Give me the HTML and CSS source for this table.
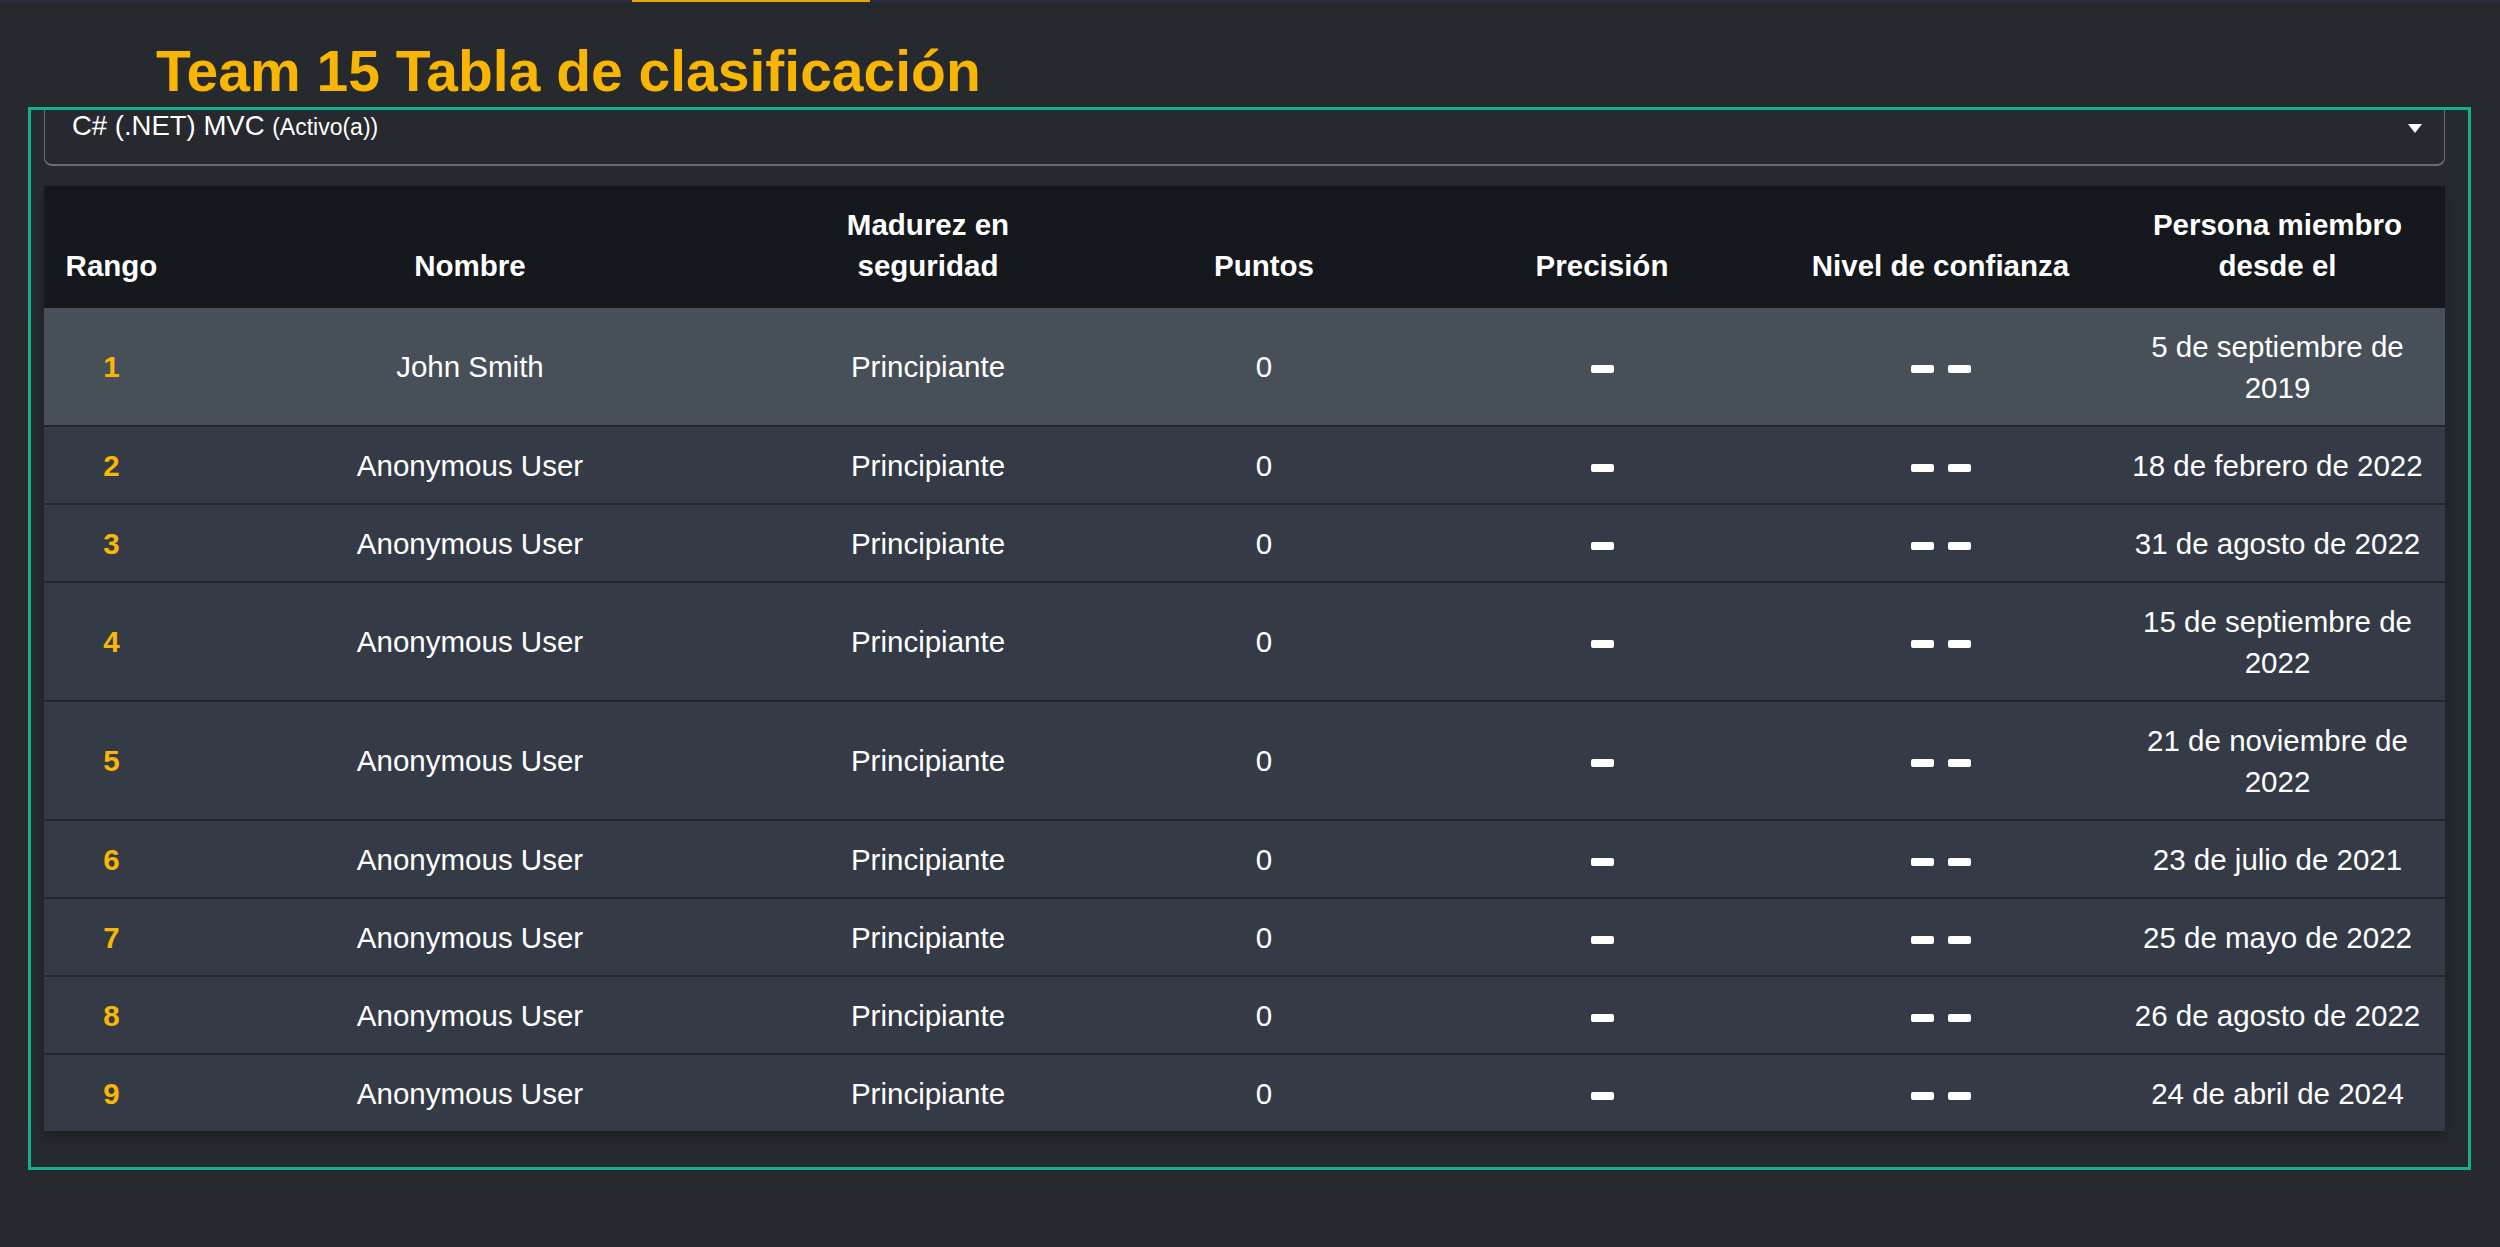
FILE: index.html
```html
<!DOCTYPE html>
<html lang="es">
<head>
<meta charset="utf-8">
<title>Team 15 Tabla de clasificación</title>
<link rel="stylesheet" href="styles.css">
</head>
<body>
<div class="topbar"><span class="topbar-accent"></span></div>
<h1 class="title">Team 15 Tabla de clasificación</h1>
<section class="board">
  <div class="select">
    <span class="select-text">C# (.NET) MVC <small>(Activo(a))</small></span>
    <span class="caret"></span>
  </div>
  <table class="ranking">
    <colgroup>
      <col class="c-rank"><col class="c-name"><col class="c-mat"><col class="c-pts"><col class="c-prec"><col class="c-conf"><col>
    </colgroup>
    <thead>
      <tr>
        <th>Rango</th><th>Nombre</th><th>Madurez en seguridad</th><th>Puntos</th><th>Precisión</th><th>Nivel de confianza</th><th>Persona miembro desde el</th>
      </tr>
    </thead>
    <tbody>
      <tr class="me"><td class="rank">1</td><td>John Smith</td><td>Principiante</td><td>0</td><td><span class="dash"></span></td><td><span class="dash"></span><span class="dash"></span></td><td>5 de septiembre de 2019</td></tr>
      <tr><td class="rank">2</td><td>Anonymous User</td><td>Principiante</td><td>0</td><td><span class="dash"></span></td><td><span class="dash"></span><span class="dash"></span></td><td>18 de febrero de 2022</td></tr>
      <tr><td class="rank">3</td><td>Anonymous User</td><td>Principiante</td><td>0</td><td><span class="dash"></span></td><td><span class="dash"></span><span class="dash"></span></td><td>31 de agosto de 2022</td></tr>
      <tr><td class="rank">4</td><td>Anonymous User</td><td>Principiante</td><td>0</td><td><span class="dash"></span></td><td><span class="dash"></span><span class="dash"></span></td><td>15 de septiembre de 2022</td></tr>
      <tr><td class="rank">5</td><td>Anonymous User</td><td>Principiante</td><td>0</td><td><span class="dash"></span></td><td><span class="dash"></span><span class="dash"></span></td><td>21 de noviembre de 2022</td></tr>
      <tr><td class="rank">6</td><td>Anonymous User</td><td>Principiante</td><td>0</td><td><span class="dash"></span></td><td><span class="dash"></span><span class="dash"></span></td><td>23 de julio de 2021</td></tr>
      <tr><td class="rank">7</td><td>Anonymous User</td><td>Principiante</td><td>0</td><td><span class="dash"></span></td><td><span class="dash"></span><span class="dash"></span></td><td>25 de mayo de 2022</td></tr>
      <tr><td class="rank">8</td><td>Anonymous User</td><td>Principiante</td><td>0</td><td><span class="dash"></span></td><td><span class="dash"></span><span class="dash"></span></td><td>26 de agosto de 2022</td></tr>
      <tr><td class="rank">9</td><td>Anonymous User</td><td>Principiante</td><td>0</td><td><span class="dash"></span></td><td><span class="dash"></span><span class="dash"></span></td><td>24 de abril de 2024</td></tr>
    </tbody>
  </table>
</section>
</body>
</html>
```

FILE: styles.css
```css
html, body {
  margin: 0;
  padding: 0;
  background: #26292e;
  color: #ffffff;
  font-family: "Liberation Sans", Arial, sans-serif;
  min-height: 1247px;
}

.topbar {
  height: 2px;
  background: #2c2e40;
  display: flex;
}

.topbar-accent {
  margin-left: 632px;
  width: 238px;
  height: 2px;
  background: #e7a800;
}

.title {
  margin: 37px 0 4px 0;
  padding-left: 156px;
  font-size: 57px;
  line-height: 64px;
  font-weight: 700;
  color: #f8b602;
}

.board {
  margin-left: 28px;
  width: 2443px;
  box-sizing: border-box;
  border: 3px solid #12b08c;
  padding: 0 23px 36px 13px;
}

.select {
  height: 53px;
  box-sizing: content-box;
  border: 1px solid #6b6d70;
  border-top: none;
  border-bottom: 2px solid #6b6d70;
  border-radius: 0 0 8px 8px;
  padding: 1px 22px 0 27px;
  display: flex;
  align-items: flex-start;
  justify-content: space-between;
  margin-bottom: 20px;
}

.select-text {
  font-size: 27.5px;
  line-height: 30px;
  color: #ffffff;
}

.select-text small {
  font-size: 23px;
}

.caret {
  margin-top: 13px;
  width: 0;
  height: 0;
  border-left: 7.5px solid transparent;
  border-right: 7.5px solid transparent;
  border-top: 9px solid #ffffff;
}

.ranking {
  width: 2401px;
  border-collapse: collapse;
  table-layout: fixed;
  box-shadow: 0 6px 10px rgba(0, 0, 0, 0.25);
  font-size: 29.5px;
  line-height: 41px;
}

.c-rank { width: 135px; }
.c-name { width: 582px; }
.c-mat { width: 334px; }
.c-pts { width: 338px; }
.c-prec { width: 338px; }
.c-conf { width: 339px; }

.ranking th {
  background: #15181c;
  font-weight: 700;
  text-align: center;
  vertical-align: bottom;
  padding: 18px 16px 22px;
}

.ranking td {
  background: #343b46;
  text-align: center;
  vertical-align: middle;
  padding: 17.5px 16px;
  border-bottom: 2px solid #22262b;
}

.ranking tbody tr:last-child td {
  border-bottom: none;
}

.ranking tr.me td {
  background: #474f59;
}

.ranking td.rank {
  color: #f9b704;
  font-weight: 700;
}

.dash {
  display: inline-block;
  width: 23px;
  height: 8px;
  border-radius: 2px;
  background: #ffffff;
  vertical-align: middle;
}

.dash + .dash {
  margin-left: 14px;
}
```
